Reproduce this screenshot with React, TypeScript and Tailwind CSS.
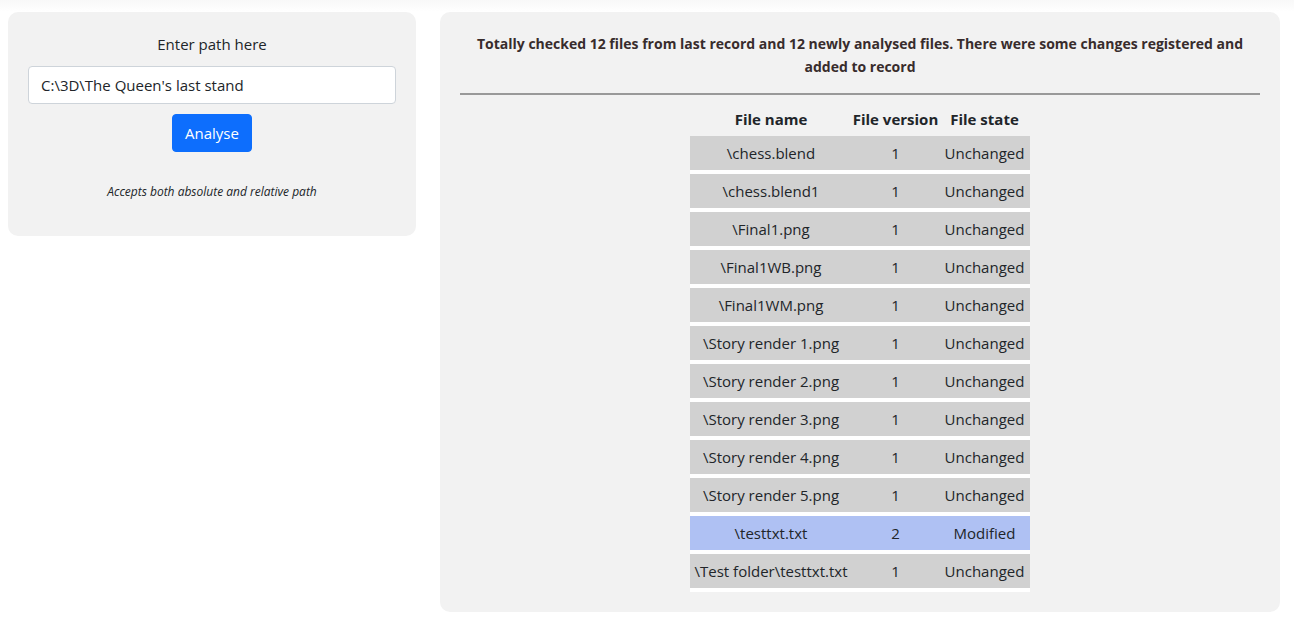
type FileRow = { name: string; version: number; state: "Unchanged" | "Modified" };

const files: FileRow[] = [
  { name: "\\chess.blend", version: 1, state: "Unchanged" },
  { name: "\\chess.blend1", version: 1, state: "Unchanged" },
  { name: "\\Final1.png", version: 1, state: "Unchanged" },
  { name: "\\Final1WB.png", version: 1, state: "Unchanged" },
  { name: "\\Final1WM.png", version: 1, state: "Unchanged" },
  { name: "\\Story render 1.png", version: 1, state: "Unchanged" },
  { name: "\\Story render 2.png", version: 1, state: "Unchanged" },
  { name: "\\Story render 3.png", version: 1, state: "Unchanged" },
  { name: "\\Story render 4.png", version: 1, state: "Unchanged" },
  { name: "\\Story render 5.png", version: 1, state: "Unchanged" },
  { name: "\\testtxt.txt", version: 2, state: "Modified" },
  { name: "\\Test folder\\testtxt.txt", version: 1, state: "Unchanged" },
];

function PathForm() {
  return (
    <form
      className="flex flex-col items-center rounded-[10px] bg-[#f2f2f2] p-5 pb-9"
      onSubmit={(event) => event.preventDefault()}
    >
      <label htmlFor="path" className="mb-2.5 leading-6">
        Enter path here
      </label>
      <input
        id="path"
        type="text"
        defaultValue="C:\3D\The Queen's last stand"
        className="h-[38px] w-full rounded border border-[#ced4da] bg-white px-3 outline-none focus:border-[#86b7fe]"
      />
      <button
        type="submit"
        className="mt-2.5 h-[38px] rounded border border-[#0d6efd] bg-[#0d6efd] px-3 text-white hover:bg-[#0b5ed7]"
      >
        Analyse
      </button>
      <p className="mt-8 text-[12px] leading-4 italic">Accepts both absolute and relative path</p>
    </form>
  );
}

function Results() {
  return (
    <section className="rounded-[10px] bg-[#f2f2f2] p-5">
      <p className="text-center text-[14px] leading-[23px] font-bold text-[#382c2c]">
        Totally checked 12 files from last record and 12 newly analysed files. There were some changes registered and
        added to record
      </p>
      <hr className="mt-[15px] mb-2.5 border-t-2 border-[#999]" />
      <table className="mx-auto border-separate border-spacing-0 text-center">
        <thead>
          <tr className="h-[31px] leading-6">
            <th className="min-w-[162px] pb-1">File name</th>
            <th className="min-w-[87px] pb-1">File version</th>
            <th className="min-w-[91px] pb-1">File state</th>
          </tr>
        </thead>
        <tbody>
          {files.map((file) => (
            <tr key={file.name} className={file.state === "Modified" ? "h-[38px] bg-[#afc1f3]" : "h-[38px] bg-[#d1d1d1]"}>
              <td className="border-b-4 border-white">{file.name}</td>
              <td className="border-b-4 border-white">{file.version}</td>
              <td className="border-b-4 border-white">{file.state}</td>
            </tr>
          ))}
        </tbody>
      </table>
    </section>
  );
}

export default function App() {
  return (
    <main className="min-h-screen bg-white bg-linear-to-b from-[#f8f8f8] to-white to-[12px] pt-3 pr-3.5 pb-3.5 pl-2 font-['Open_Sans','Noto_Sans',sans-serif] text-[15px] text-[#212529]">
      <div className="grid grid-cols-[17fr_35fr] items-start gap-6">
        <PathForm />
        <Results />
      </div>
    </main>
  );
}
